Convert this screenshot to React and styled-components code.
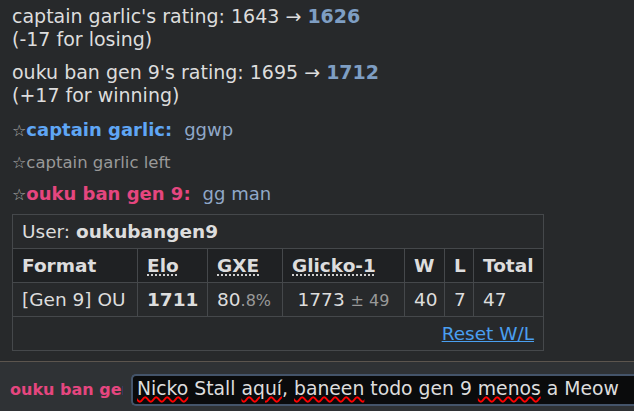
import React from 'react';
import styled, { createGlobalStyle } from 'styled-components';

const Global = createGlobalStyle`
  html, body {
    margin: 0;
    padding: 0;
    background: #27292b;
  }
  body {
    font-family: "DejaVu Sans", Verdana, sans-serif;
    color: #ddd;
  }
`;

const Page = styled.div`
  width: 634px;
  height: 411px;
  display: flex;
  flex-direction: column;
  overflow: hidden;
`;

const Log = styled.div`
  flex: 1;
  padding: 5px 12px 0 12px;
  display: flex;
  flex-direction: column;
`;

const Notice = styled.div`
  font-size: 19px;
  line-height: 23px;
  margin-bottom: ${(p) => p.gap || 0}px;
`;

const Strong = styled.strong`
  color: ${(p) => p.color || 'inherit'};
`;

const ChatLine = styled.div`
  font-size: 18px;
  line-height: 24px;
  margin-top: ${(p) => p.top}px;
  white-space: nowrap;
`;

const Star = styled.span`
  color: #aaa;
  font-weight: normal;
  font-size: 16px;
`;

const Name = styled.strong`
  color: ${(p) => p.color};
`;

const Message = styled.span`
  color: #90a8c8;
  margin-left: 12px;
`;

const Left = styled.div`
  font-size: 16.5px;
  color: #999;
  line-height: 20px;
  margin-top: 10px;
`;

const Table = styled.table`
  border-collapse: collapse;
  table-layout: fixed;
  font-size: 18.5px;
  color: #ddd;
  margin-top: 7px;
  width: 531px;
`;

const Col = styled.col`
  width: ${(p) => p.w}px;
`;

const Cell = styled.td`
  border: 1px solid #45484b;
  padding: 0 9px;
  height: 33px;
  white-space: nowrap;
  text-align: ${(p) => p.align || 'left'};
  font-weight: ${(p) => (p.bold ? 'bold' : 'normal')};
`;

const Head = styled.th`
  border: 1px solid #45484b;
  padding: 0 9px;
  height: 33px;
  white-space: nowrap;
  text-align: left;
  background: #1f2123;
`;

const Abbr = styled.abbr`
  text-decoration: underline dotted;
  text-underline-offset: 3px;
`;

const Dim = styled.small`
  color: #999;
  font-size: 16px;
`;

const Link = styled.a`
  color: #4a9ff0;
  text-decoration: underline;
`;

const Bottom = styled.div`
  border-top: 1px solid #5c554e;
  background: #2f3235;
  height: 50px;
  box-sizing: border-box;
  display: flex;
  align-items: flex-start;
  padding: 12px 0 0 10px;
  gap: 8px;
`;

const Me = styled.div`
  width: 113px;
  overflow: hidden;
  white-space: nowrap;
  color: #e5467f;
  font-weight: bold;
  font-size: 16px;
  line-height: 32px;
`;

const Input = styled.div`
  flex: 1;
  height: 32px;
  box-sizing: border-box;
  background: #0a0b0c;
  border: 2px solid #44546a;
  border-right: none;
  border-radius: 5px 0 0 5px;
  padding: 1px 0 0 4px;
  font-size: 18.8px;
  line-height: 24px;
  color: #ddd;
  white-space: nowrap;
  overflow: hidden;
`;

const Typo = styled.span`
  text-decoration: underline wavy #f00;
  text-decoration-thickness: 1.5px;
  text-underline-offset: 1px;
`;

const widths = [125, 70, 75, 122, 40, 29, 70];

export default function App() {
  return (
    <Page>
      <Global />
      <Log>
        <Notice gap={10}>
          captain garlic's rating: 1643 → <Strong color="#7e9ec3">1626</Strong>
          <br />
          (-17 for losing)
        </Notice>
        <Notice>
          ouku ban gen 9's rating: 1695 → <Strong color="#7e9ec3">1712</Strong>
          <br />
          (+17 for winning)
        </Notice>
        <ChatLine top={11}>
          <Star>☆</Star>
          <Name color="#5fa6f5">captain garlic:</Name>
          <Message>ggwp</Message>
        </ChatLine>
        <Left>
          <Star>☆</Star>captain garlic left
        </Left>
        <ChatLine top={9}>
          <Star>☆</Star>
          <Name color="#e5467f">ouku ban gen 9:</Name>
          <Message>gg man</Message>
        </ChatLine>
        <Table>
          <colgroup>
            {widths.map((w, i) => (
              <Col key={i} w={w} />
            ))}
          </colgroup>
          <tbody>
            <tr>
              <Cell colSpan={7}>
                User: <strong>oukubangen9</strong>
              </Cell>
            </tr>
            <tr>
              <Head>Format</Head>
              <Head><Abbr>Elo</Abbr></Head>
              <Head><Abbr>GXE</Abbr></Head>
              <Head><Abbr>Glicko-1</Abbr></Head>
              <Head>W</Head>
              <Head>L</Head>
              <Head>Total</Head>
            </tr>
            <tr>
              <Cell>[Gen 9] OU</Cell>
              <Cell bold>1711</Cell>
              <Cell>80<Dim>.8%</Dim></Cell>
              <Cell align="center">1773 <Dim>± 49</Dim></Cell>
              <Cell>40</Cell>
              <Cell>7</Cell>
              <Cell>47</Cell>
            </tr>
            <tr>
              <Cell colSpan={7} align="right">
                <Link>Reset W/L</Link>
              </Cell>
            </tr>
          </tbody>
        </Table>
      </Log>
      <Bottom>
        <Me>ouku ban gen 9</Me>
        <Input>
          <Typo>Nicko</Typo>&nbsp;Stall&nbsp;<Typo>aquí</Typo>,&nbsp;<Typo>baneen</Typo>&nbsp;todo gen 9&nbsp;<Typo>menos</Typo>&nbsp;a Meow
        </Input>
      </Bottom>
    </Page>
  );
}
